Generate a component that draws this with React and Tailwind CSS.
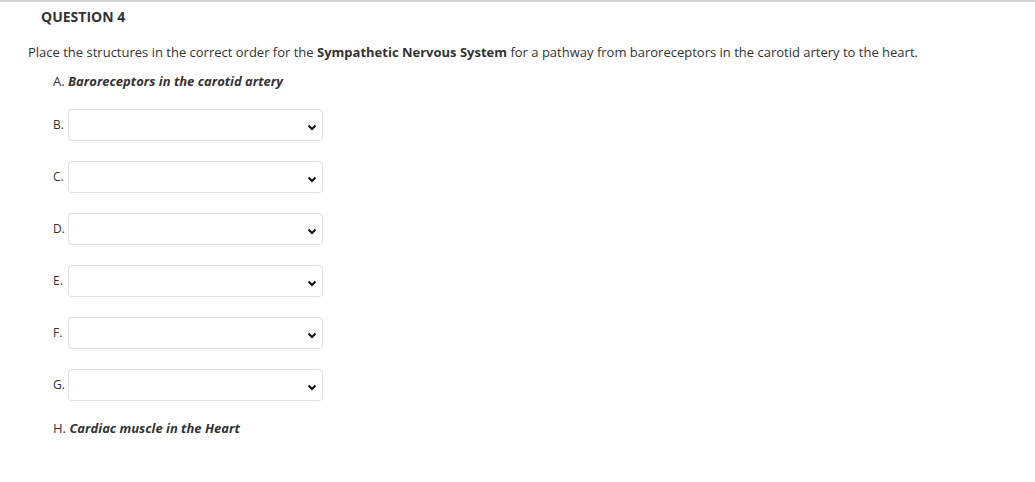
import React from 'react';

const Chevron = () => (
  <svg width="10" height="7" viewBox="0 0 10 7" className="absolute right-[5px] top-[14px] pointer-events-none">
    <path d="M1.5 1.5 L5 5 L8.5 1.5" fill="none" stroke="#111" strokeWidth="2" />
  </svg>
);

const SelectRow = ({ letter }) => (
  <div className="flex items-center h-[32px] mb-[20px]">
    <span className="w-[15px] text-[12px] text-[#333]">{letter}.</span>
    <div className="relative w-[255px] h-[32px] border border-[#e0e0e0] rounded-[4px] bg-white">
      <Chevron />
    </div>
  </div>
);

export default function App() {
  const letters = ['B', 'C', 'D', 'E', 'F', 'G'];
  return (
    <div className="w-[1035px] h-[482px] bg-white text-[#333]" style={{ fontFamily: '"Open Sans", sans-serif' }}>
      <div className="border-t-2 border-[#d4d4d4]" />
      <div className="pl-[41px] pt-[5px] text-[14px] leading-[20px] font-bold text-[#333]">QUESTION 4</div>
      <p className="pl-[28px] mt-[16px] text-[13px] text-[#333]">
        Place the structures in the correct order for the <b>Sympathetic Nervous System</b> for a pathway from baroreceptors in the carotid artery to the heart.
      </p>
      <div className="pl-[53px] mt-[9px] text-[13px]">
        A. <b><i>Baroreceptors in the carotid artery</i></b>
      </div>
      <div className="pl-[53px] mt-[18px]">
        {letters.map(l => <SelectRow key={l} letter={l} />)}
      </div>
      <div className="pl-[53px] -mt-[2px] text-[13px]">
        H. <b><i>Cardiac muscle in the Heart</i></b>
      </div>
    </div>
  );
}
